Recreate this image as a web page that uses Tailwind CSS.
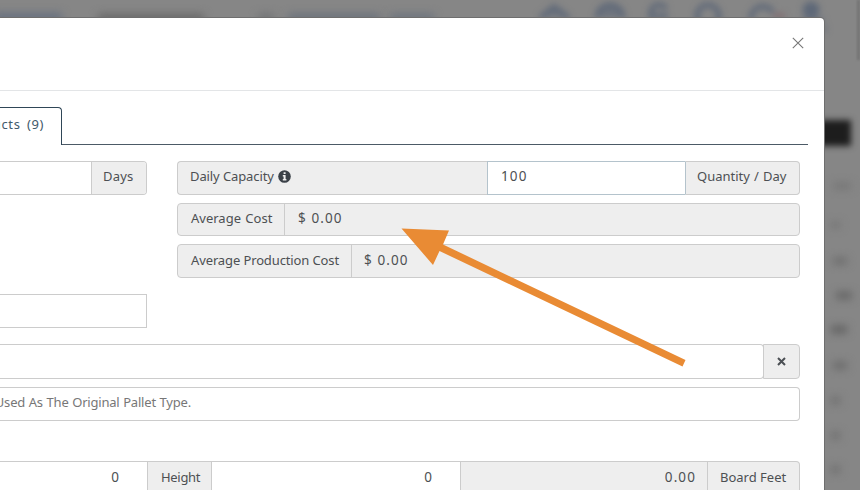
<!DOCTYPE html>
<html lang="en">
<head>
  <meta charset="UTF-8">
  <meta name="viewport" content="width=device-width, initial-scale=1.0">
  <title>Product Details</title>
  <script src="https://cdn.jsdelivr.net/npm/@tailwindcss/browser@4"></script>
</head>
<body class="relative w-[860px] h-[490px] overflow-hidden bg-[#868686] font-['Noto_Sans','Open_Sans',sans-serif] text-[13px] text-[#4d5053]">

  <!-- Blurred page behind the modal -->
  <div class="absolute inset-0 overflow-hidden" aria-hidden="true">
    <div class="absolute left-[-6px] top-[13px] w-[68px] h-[9px] bg-[#667080] blur-[4px]"></div>
    <div class="absolute left-[98px] top-[14px] w-[106px] h-[9px] bg-[#686868] blur-[4px]"></div>
    <div class="absolute left-[258px] top-[14px] w-[16px] h-[8px] bg-[#707274] blur-[4px]"></div>
    <div class="absolute left-[288px] top-[14px] w-[92px] h-[8px] bg-[#68707b] blur-[4px]"></div>
    <div class="absolute left-[390px] top-[14px] w-[44px] h-[8px] bg-[#6a727d] blur-[4px]"></div>
    <svg class="absolute left-[530px] top-0 blur-[3px]" width="300" height="46" fill="none" stroke="#5e6878" stroke-width="5">
      <path d="M10 18 L24 7 L39 18" fill="#5e6878" fill-opacity="0.5"/>
      <path d="M67 18 a13 13 0 0 1 26 0" fill="#5e6878" fill-opacity="0.6"/>
      <path d="M121 20 v-6 a8 8 0 0 1 15 -5 M124 16 h14"/>
      <circle cx="178" cy="16" r="11"/>
      <path d="M221 20 a12 12 0 0 1 22 -8"/>
      <path d="M243 16 h12" stroke="#806c70"/>
      <circle cx="281" cy="10" r="6" fill="#5e6878"/>
      <path d="M272 20 h22 M289 29 h8" stroke-opacity="0.6"/>
    </svg>
    <div class="absolute left-[810px] top-[120px] w-[41px] h-[26px] bg-[#1d1d1d] blur-[3px]"></div>
    <div class="absolute left-[833px] top-[183px] w-[18px] h-[6px] bg-[#747474] blur-[4px]"></div>
    <div class="absolute left-[831px] top-[222px] w-[9px] h-[6px] bg-[#727272] blur-[4px]"></div>
    <div class="absolute left-[833px] top-[258px] w-[14px] h-[6px] bg-[#686868] blur-[4px]"></div>
    <div class="absolute left-[836px] top-[292px] w-[16px] h-[7px] bg-[#626262] blur-[4px]"></div>
    <div class="absolute left-[831px] top-[326px] w-[16px] h-[7px] bg-[#5e5e5e] blur-[4px]"></div>
    <div class="absolute left-[833px] top-[362px] w-[14px] h-[7px] bg-[#686868] blur-[4px]"></div>
    <div class="absolute left-[831px] top-[397px] w-[9px] h-[7px] bg-[#6c6c6c] blur-[4px]"></div>
    <div class="absolute left-[831px] top-[432px] w-[9px] h-[7px] bg-[#6c6c6c] blur-[4px]"></div>
    <div class="absolute left-[831px] top-[466px] w-[9px] h-[7px] bg-[#6c6c6c] blur-[4px]"></div>
    <div class="absolute right-0 top-0 w-[3px] h-[60px] bg-[#737373] blur-[1px]"></div>
  </div>

  <div class="relative pt-[18px]">
    <!-- Modal -->
    <div class="w-[824px] h-[472px] overflow-hidden bg-white rounded-tr-[4px] shadow-[0_0_0_1px_#6e6e6e]">

      <!-- Header -->
      <div class="h-[73px] flex justify-end pt-[19px] pr-[20px] border-b border-[#e3e5e7]">
        <button class="w-3 h-3 flex items-center justify-center" aria-label="Close">
          <svg width="12" height="12" viewBox="0 0 12 12" fill="none" stroke="#777777" stroke-width="1.1">
            <path d="M0.8 0.8 L11.2 11.2 M11.2 0.8 L0.8 11.2"/>
          </svg>
        </button>
      </div>

      <!-- Tabs -->
      <div class="flex mt-4 mr-4 h-[38px]">
        <div class="w-[62px] flex justify-end pr-[17px] pt-[6px] border-t border-r border-[#2f4657] rounded-tr-[4px] text-[#3f5a6b] whitespace-nowrap leading-5">
          <span class="tracking-[0.6px] [word-spacing:2.5px]">Products (9)</span>
        </div>
        <div class="flex-1 border-b border-[#4c5a66]"></div>
      </div>

      <!-- Form -->
      <div class="pt-4 pr-6">
        <div class="flex gap-[30px]">
          <div class="w-[147px] flex flex-col gap-[99px]">
            <div class="flex h-[34px] border border-l-0 border-[#cccccc] rounded-r-[4px] overflow-hidden leading-[28px]">
              <div class="flex-1"></div>
              <div class="w-[55px] bg-[#eeeeee] border-l border-[#cccccc] pl-[11px] tracking-[0.2px]">Days</div>
            </div>
            <div class="h-[34px] border border-l-0 border-[#cccccc]"></div>
          </div>

          <div class="flex-1 flex flex-col gap-2 leading-[28px]">
            <div class="flex h-[34px]">
              <div class="flex-1 flex bg-[#eeeeee] border border-r-0 border-[#cccccc] rounded-l-[4px] pl-3">
                <span class="tracking-[-0.1px]">Daily Capacity</span>
                <svg class="ml-1 mt-[8px]" width="13" height="13" viewBox="0 0 13 13">
                  <circle cx="6.5" cy="6.5" r="6.3" fill="#3a4047"/>
                  <path d="M5.6 2.3h2v1.8h-2z M4.8 5.1h2.8v4h0.8v1.3H4.8V9.1h0.8V6.4H4.8z" fill="#eeeeee"/>
                </svg>
              </div>
              <div class="w-[198px] border border-r-0 border-[#b4c3cc] pl-[13px] text-[13.5px] tracking-[1.1px]">100</div>
              <div class="w-[115px] bg-[#eeeeee] border border-[#cccccc] border-l-[#b4c3cc] rounded-r-[4px] pl-[11px] whitespace-nowrap [word-spacing:0.8px]">Quantity / Day</div>
            </div>
            <div class="flex h-[33px] bg-[#eeeeee] border border-[#cccccc] rounded-[4px]">
              <div class="w-[107px] border-r border-[#cccccc] pl-[13px] whitespace-nowrap [word-spacing:1px]">Average Cost</div>
              <div class="pl-[13px] text-[13.5px] tracking-[1.1px]">$ 0.00</div>
            </div>
            <div class="flex h-[34px] bg-[#eeeeee] border border-[#cccccc] rounded-[4px] leading-[30px]">
              <div class="w-[174px] border-r border-[#cccccc] pl-[13px] whitespace-nowrap tracking-[-0.12px]">Average Production Cost</div>
              <div class="pl-3 text-[13.5px] tracking-[1.1px]">$ 0.00</div>
            </div>
          </div>
        </div>

        <div class="flex h-[35px] mt-4">
          <div class="flex-1 border-y border-r border-[#cccccc] rounded-r-[4px]"></div>
          <button class="w-[37px] -ml-px flex items-center justify-center bg-[#eeeeee] border border-[#cccccc] rounded-r-[4px]" aria-label="Clear">
            <svg class="-mt-px" width="9" height="9" viewBox="0 0 9 9" fill="none" stroke="#4b4f54" stroke-width="2">
              <path d="M1 1 L8 8 M8 1 L1 8"/>
            </svg>
          </button>
        </div>

        <div class="flex h-[34px] mt-2 border border-l-0 border-[#cccccc] rounded-r-[4px] leading-[28px] overflow-hidden">
          <div class="w-[191px] flex justify-end whitespace-nowrap text-[#777777]">
            <span class="tracking-[-0.2px] [word-spacing:0.5px]">Used As The Original Pallet Type.</span>
          </div>
        </div>

        <div class="flex h-[34px] mt-10 border border-l-0 border-[#cccccc] rounded-r-[4px] bg-[#eeeeee] leading-[30px]">
          <div class="w-[147px] bg-white pr-[28px] text-right text-[13.5px]">0</div>
          <div class="w-[65px] border-x border-[#cccccc] pl-[13px] tracking-[-0.3px]">Height</div>
          <div class="w-[248px] bg-white pr-[28px] text-right text-[13.5px]">0</div>
          <div class="w-[248px] border-x border-[#cccccc] pr-[11px] text-right text-[13.5px] tracking-[1.1px]">0.00</div>
          <div class="flex-1 pl-3 whitespace-nowrap">Board Feet</div>
        </div>
      </div>
    </div>
  </div>

  <!-- Pointer arrow -->
  <svg class="absolute inset-0" width="860" height="490" fill="#e98b34">
    <path d="M401.5 228.5 L449 230.5 L443 244.5 L685.5 360 L682.5 366.5 L439.5 251 L433 265 Z"/>
  </svg>

</body>
</html>
